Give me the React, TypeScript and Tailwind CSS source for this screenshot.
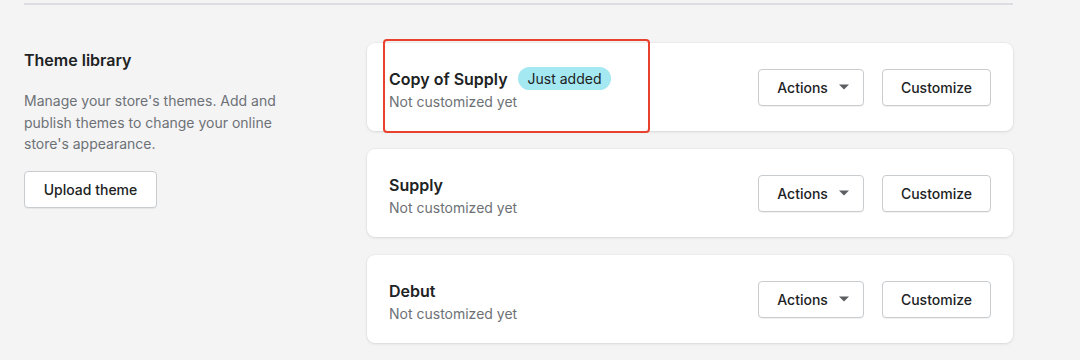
import React from "react";

function Caret() {
  return (
    <svg width="10" height="6" viewBox="0 0 10 6" className="ml-[11px]">
      <path d="M0 0.5 L10 0.5 L5 5.5 Z" fill="#5c5f62" />
    </svg>
  );
}

function Btn({ children, className = "" }: { children: React.ReactNode; className?: string }) {
  return (
    <button
      className={
        "h-[37px] flex items-center rounded-[4px] border border-[#c9cccf] bg-white text-[14px] font-medium text-[#202223] shadow-[0_1px_0_rgba(0,0,0,0.05)] " +
        className
      }
    >
      {children}
    </button>
  );
}

function Card({ title, badge, highlight }: { title: string; badge?: string; highlight?: boolean }) {
  return (
    <div className="relative h-[88px] flex items-center justify-between rounded-[8px] bg-white pl-[22px] pr-[22px] shadow-[0_0_0_1px_rgba(63,63,68,0.03),0_1px_3px_rgba(63,63,68,0.12)]">
      <div className="flex flex-col mt-[4px]">
        <div className="flex items-center h-[24px]">
          <span className="text-[16px] font-semibold text-[#202223] leading-[24px]">{title}</span>
          {badge && (
            <span className="ml-[10px] h-[23px] px-[10px] flex items-center rounded-full bg-[#a4e8f2] text-[14px] text-[#202223]">
              {badge}
            </span>
          )}
        </div>
        <span className="text-[14px] leading-[20px] text-[#6d7175] mt-[1px]">Not customized yet</span>
      </div>
      <div className="flex items-center gap-[18px]">
        <Btn className="pl-[18px] pr-[14px]">
          Actions
          <Caret />
        </Btn>
        <Btn className="px-[18px]">Customize</Btn>
      </div>
      {highlight && (
        <div className="absolute left-[16px] top-[-4px] w-[267px] h-[94px] rounded-[4px] border-2 border-[#e8412d] pointer-events-none" />
      )}
    </div>
  );
}

export default function App() {
  return (
    <div
      className="w-[1080px] h-[360px] overflow-hidden bg-[#f4f4f5]"
      style={{ fontFamily: "Inter, 'Noto Sans', sans-serif" }}
    >
      <div className="ml-6 mr-[67px] mt-[3px] border-t-2 border-[#dcdde0]" />
      <div className="flex pl-6 pr-[67px] pt-[38px]">
        <div className="w-[343px] shrink-0 pt-[5px]">
          <h2 className="text-[16px] leading-[24px] font-semibold text-[#202223]">Theme library</h2>
          <p className="mt-[18px] w-[268px] text-[14px] leading-[21.5px] text-[#6d7175]">
            Manage your store's themes. Add and publish themes to change your online store's appearance.
          </p>
          <Btn className="mt-[16px] px-[17px] w-[133px] justify-center">Upload theme</Btn>
        </div>
        <div className="flex-1 flex flex-col gap-[18px]">
          <Card title="Copy of Supply" badge="Just added" highlight />
          <Card title="Supply" />
          <Card title="Debut" />
        </div>
      </div>
    </div>
  );
}
